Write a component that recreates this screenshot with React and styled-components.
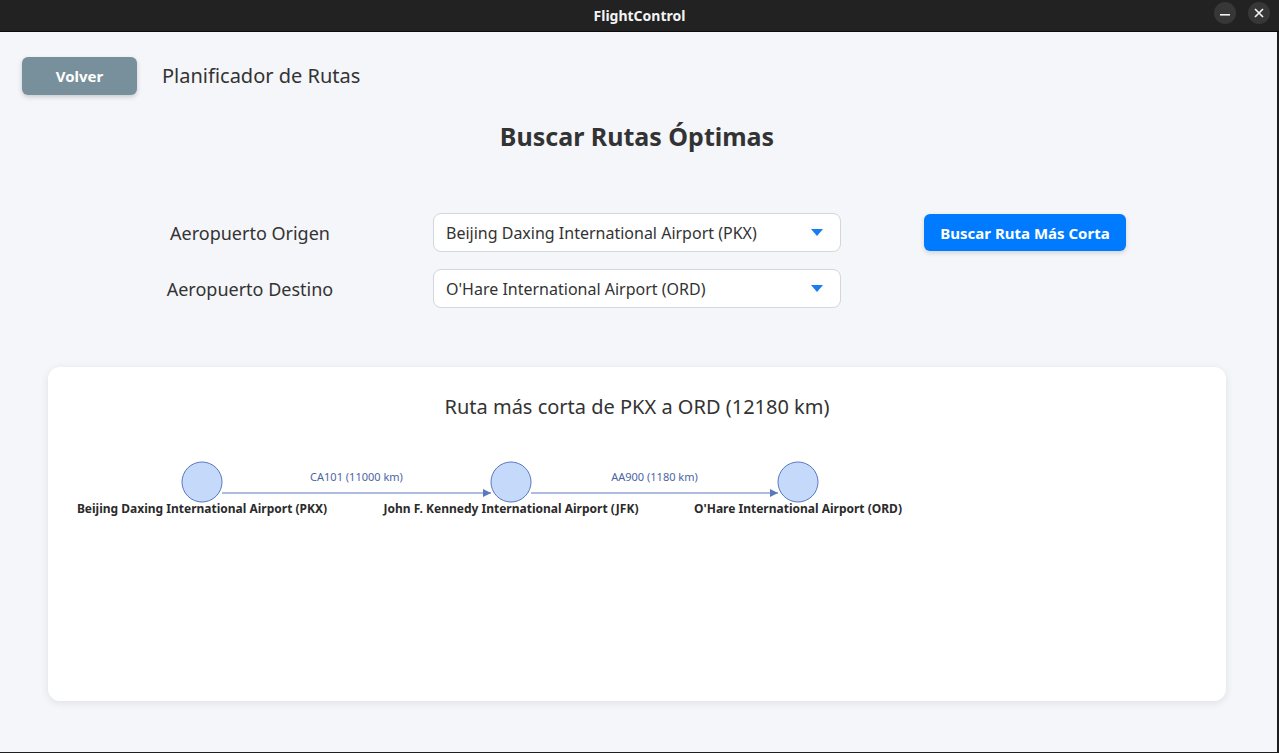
import React from "react";
import styled, { createGlobalStyle } from "styled-components";

const GlobalStyle = createGlobalStyle`
  html, body {
    margin: 0;
    padding: 0;
    background: #1e1e1e;
  }
  body {
    font-family: "Noto Sans", "Open Sans", sans-serif;
  }
`;

const route = [
  { code: "PKX", name: "Beijing Daxing International Airport (PKX)", x: 154 },
  { code: "JFK", name: "John F. Kennedy International Airport (JFK)", x: 463 },
  { code: "ORD", name: "O'Hare International Airport (ORD)", x: 750 },
];

const flights = [
  { label: "CA101 (11000 km)" },
  { label: "AA900 (1180 km)" },
];

function RouteChart() {
  const cy = 58;
  const r = 20;
  return (
    <Chart width="100%" height="230">
      <defs>
        <marker
          id="arrow"
          markerWidth="8"
          markerHeight="8"
          refX="8"
          refY="4"
          orient="auto"
          markerUnits="userSpaceOnUse"
        >
          <path d="M0,0 L8,4 L0,8 Z" fill="#5a79bd" />
        </marker>
      </defs>
      {flights.map((f, i) => {
        const from = route[i];
        const to = route[i + 1];
        const x1 = from.x + r;
        const x2 = to.x - r;
        return (
          <g key={f.label}>
            <line
              x1={x1}
              y1={cy + 11}
              x2={x2}
              y2={cy + 11}
              stroke="#5a79bd"
              strokeWidth="1.2"
              markerEnd="url(#arrow)"
            />
            <EdgeLabel x={(x1 + x2) / 2} y={cy - 1} textAnchor="middle">
              {f.label}
            </EdgeLabel>
          </g>
        );
      })}
      {route.map((a) => (
        <g key={a.code}>
          <circle
            cx={a.x}
            cy={cy}
            r={r}
            fill="#c5d9fb"
            stroke="#5a79bd"
            strokeWidth="1"
          />
          <NodeLabel x={a.x} y={cy + 31} textAnchor="middle">
            {a.name}
          </NodeLabel>
        </g>
      ))}
    </Chart>
  );
}

export default function App() {
  return (
    <>
      <GlobalStyle />
      <Window>
        <TitleBar>
          <WindowTitle>FlightControl</WindowTitle>
          <WindowButtons>
            <WinButton>
              <svg width="12" height="12" viewBox="0 0 12 12">
                <rect x="1" y="7" width="10" height="1.6" fill="#f2f2f2" />
              </svg>
            </WinButton>
            <WinButton>
              <svg width="12" height="12" viewBox="0 0 12 12">
                <path
                  d="M2 2 L10 10 M10 2 L2 10"
                  stroke="#f2f2f2"
                  strokeWidth="1.7"
                />
              </svg>
            </WinButton>
          </WindowButtons>
        </TitleBar>
        <Content>
          <Header>
            <BackButton>Volver</BackButton>
            <PageName>Planificador de Rutas</PageName>
          </Header>
          <Heading>Buscar Rutas Óptimas</Heading>
          <Form>
            <Label>Aeropuerto Origen</Label>
            <Select>
              <span>Beijing Daxing International Airport (PKX)</span>
              <Caret />
            </Select>
            <SearchButton>Buscar Ruta Más Corta</SearchButton>
            <Label>Aeropuerto Destino</Label>
            <Select>
              <span>O'Hare International Airport (ORD)</span>
              <Caret />
            </Select>
          </Form>
          <Card>
            <CardTitle>Ruta más corta de PKX a ORD (12180 km)</CardTitle>
            <RouteChart />
          </Card>
        </Content>
      </Window>
    </>
  );
}

const Window = styled.div`
  width: 1279px;
  height: 753px;
  display: flex;
  flex-direction: column;
  background: #1e1e1e;
  overflow: hidden;
`;

const TitleBar = styled.div`
  position: relative;
  height: 31px;
  flex-shrink: 0;
  background: #222222;
  border-bottom: 1px solid #0c0c0c;
  display: flex;
  align-items: center;
  justify-content: center;
`;

const WindowTitle = styled.div`
  color: #f4f4f4;
  font-size: 14px;
  font-weight: 700;
`;

const WindowButtons = styled.div`
  position: absolute;
  right: 9px;
  top: 2px;
  display: flex;
  gap: 12px;
`;

const WinButton = styled.div`
  width: 22px;
  height: 22px;
  border-radius: 50%;
  background: #373737;
  display: flex;
  align-items: center;
  justify-content: center;
`;

const Content = styled.div`
  flex: 1;
  margin: 0 2px 1px 0;
  background: #f5f6fa;
  padding: 25px 51px 0 22px;
  display: flex;
  flex-direction: column;
`;

const Header = styled.div`
  display: flex;
  align-items: center;
  gap: 25px;
`;

const BackButton = styled.button`
  width: 115px;
  height: 38px;
  border: none;
  border-radius: 6px;
  background: #78909c;
  color: #ffffff;
  font-family: "Noto Sans", sans-serif;
  font-size: 15px;
  font-weight: 700;
  box-shadow: 0 2px 5px rgba(0, 0, 0, 0.18);
`;

const PageName = styled.div`
  font-size: 20px;
  color: #333333;
  padding-bottom: 2px;
`;

const Heading = styled.h1`
  margin: 24px 0 0 26px;
  text-align: center;
  font-size: 25px;
  font-weight: 700;
  color: #333333;
  line-height: 34px;
`;

const Form = styled.div`
  margin: 60px 0 0 128px;
  display: grid;
  grid-template-columns: 200px 408px 202px;
  column-gap: 83px;
  row-gap: 17px;
  align-items: center;
`;

const Label = styled.div`
  text-align: center;
  font-size: 18px;
  color: #333333;
`;

const Select = styled.div`
  height: 39px;
  box-sizing: border-box;
  padding: 0 12px;
  border: 1px solid #d3d6dc;
  border-radius: 8px;
  background: #ffffff;
  display: flex;
  align-items: center;
  justify-content: space-between;
  font-size: 16px;
  color: #333333;
`;

const Caret = styled.span`
  width: 0;
  height: 0;
  margin-right: 5px;
  border-left: 6px solid transparent;
  border-right: 6px solid transparent;
  border-top: 7px solid #1a7cf2;
`;

const SearchButton = styled.button`
  height: 37px;
  border: none;
  border-radius: 6px;
  background: #007bff;
  color: #ffffff;
  font-family: "Noto Sans", sans-serif;
  font-size: 15px;
  font-weight: 700;
  box-shadow: 0 2px 5px rgba(0, 0, 0, 0.15);
`;

const Card = styled.div`
  margin: 59px 0 0 26px;
  height: 334px;
  box-sizing: border-box;
  background: #ffffff;
  border-radius: 12px;
  box-shadow: 0 2px 8px rgba(0, 0, 0, 0.09);
  padding-top: 26px;
`;

const CardTitle = styled.div`
  text-align: center;
  font-size: 20px;
  color: #333333;
  line-height: 28px;
`;

const Chart = styled.svg`
  display: block;
  margin-top: 3px;
`;

const EdgeLabel = styled.text`
  font-family: "Noto Sans", sans-serif;
  font-size: 11px;
  fill: #4b65a3;
`;

const NodeLabel = styled.text`
  font-family: "Noto Sans", sans-serif;
  font-size: 12px;
  font-weight: 700;
  fill: #2b2b2b;
`;
